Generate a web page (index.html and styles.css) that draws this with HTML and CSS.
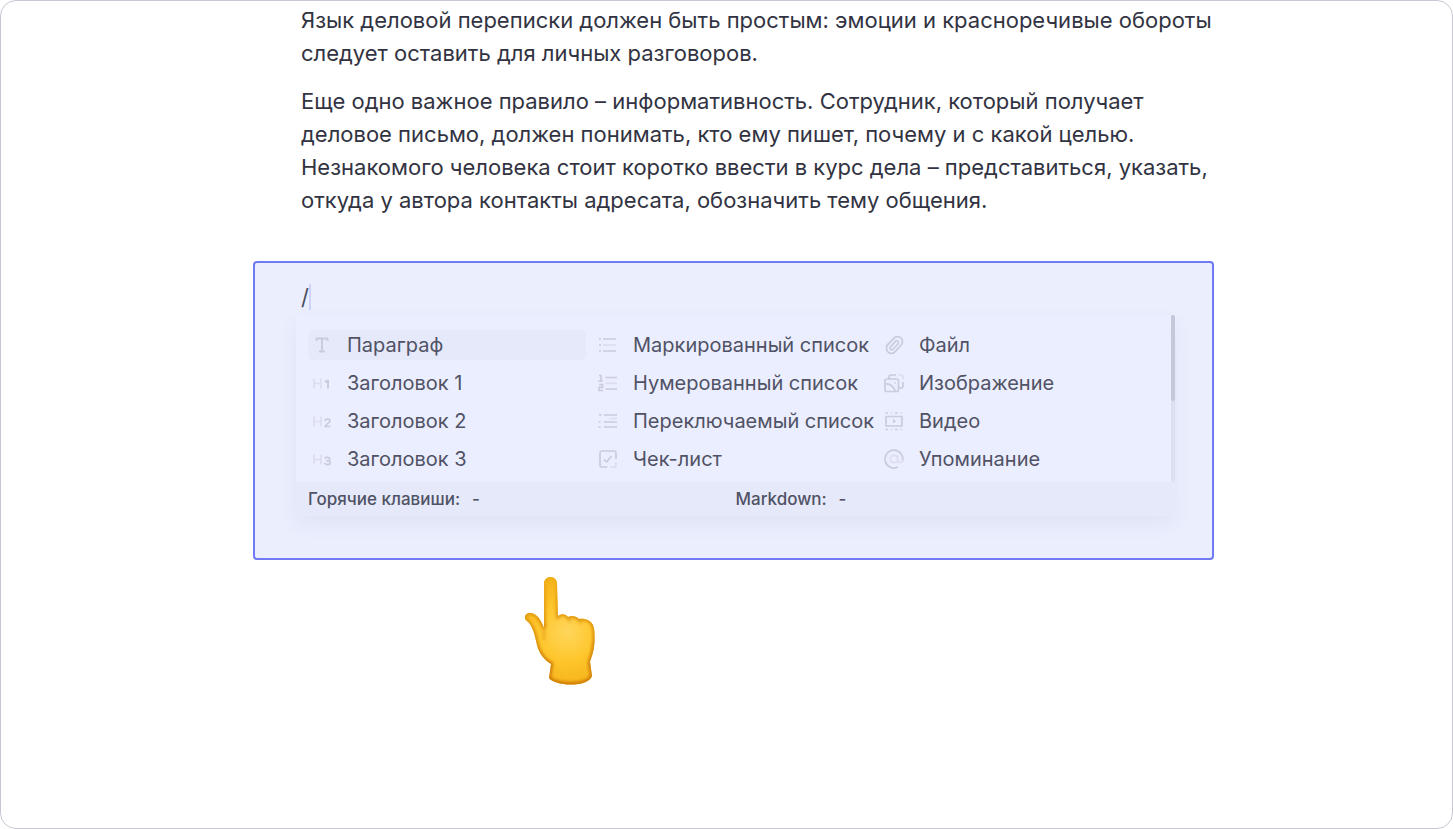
FILE: index.html
```html
<!DOCTYPE html>
<html lang="ru">
<head>
<meta charset="utf-8">
<title>Редактор</title>
<link rel="stylesheet" href="styles.css">
</head>
<body>
<main class="page">
  <article class="document">
    <div class="prose">
      <p>Язык деловой переписки должен быть простым: эмоции и красноречивые обороты следует оставить для личных разговоров.</p>
      <p>Еще одно важное правило – информативность. Сотрудник, который получает деловое письмо, должен понимать, кто ему пишет, почему и с какой целью. Незнакомого человека стоит коротко ввести в курс дела – представиться, указать, откуда у автора контакты адресата, обозначить тему общения.</p>
    </div>
    <section class="frame">
      <div class="command">/<span class="caret"></span></div>
      <div class="menu">
        <div class="menu-body">
          <div class="items">
            <button class="item active" type="button">
              <svg class="icon" viewBox="0 0 20 20"><path class="bold" d="M4.500 6V3.500h11V6M10 3.500v13M7 16.500h6"/></svg>Параграф</button>
            <button class="item" type="button">
              <svg class="icon" viewBox="0 0 20 20"><path class="faint" d="M2 5.500v10M9 5.500v10M2 10.500h7"/><path class="bold" d="M13 9l3-1.500v8"/></svg>Заголовок 1</button>
            <button class="item" type="button">
              <svg class="icon" viewBox="0 0 20 20"><path class="faint" d="M2 5.500v10M9 5.500v10M2 10.500h7"/><path d="M13 10c0-2.500 5-2.300 5 0 0 1.700-4 3.300-5 5.500h5.500"/></svg>Заголовок 2</button>
            <button class="item" type="button">
              <svg class="icon" viewBox="0 0 20 20"><path class="faint" d="M2 5.500v10M9 5.500v10M2 10.500h7"/><path d="M13 9.700c.5-2 4.700-2 4.700.2 0 1.600-1.500 1.800-2.700 1.800 1.500 0 3.200.3 3.200 2 0 2.600-5 2.500-5.500.2"/></svg>Заголовок 3</button>
            <button class="item" type="button">
              <svg class="icon" viewBox="0 0 20 20"><path d="M5 4h13M5 16h13M1 4h2M1 10h2M1 16h2"/><path class="faint" d="M5 10h13"/></svg>Маркированный список</button>
            <button class="item" type="button">
              <svg class="icon" viewBox="0 0 20 20"><path d="M7.500 4.500H19M7.500 16H19M1 2.500h2v5.500M.5 8h4.500M1 11.500h3.500v2.800H1V17.500h4"/><path class="faint" d="M7.500 10.300H19"/></svg>Нумерованный список</button>
            <button class="item" type="button">
              <svg class="icon" viewBox="0 0 20 20"><path d="M6 4h13M6 11h13M6 16h13M.5 11h2M.5 16h2"/><path class="solid" d="M.5 3h3.500L2.200 5.500z"/><path class="faint" d="M11 7.500h8"/></svg>Переключаемый список</button>
            <button class="item" type="button">
              <svg class="icon" viewBox="0 0 20 20"><path d="M9.500 18H4q-2 0-2-2V4q0-2 2-2h12q2 0 2 2v6M6 10.500l2.500 2.500 5-6"/><path class="faint" d="M12.500 18H16q2 0 2-2v-3"/></svg>Чек-лист</button>
            <button class="item" type="button">
              <svg class="icon" viewBox="0 0 20 20"><path class="faint" d="M1 11.500l4.500-4.500"/><g transform="rotate(42 10.500 10)"><path d="M5.500 9v5.500a5 5 0 0 0 10 0v-9a5 5 0 0 0-10 0V14.500"/><path d="M8.800 14.500V6.300a1.800 1.800 0 0 1 3.500 0v8.200a1.800 1.800 0 0 1-3.500 0"/></g></svg>Файл</button>
            <button class="item" type="button">
              <svg class="icon" viewBox="0 0 20 20"><path d="M3 6h9.500q2 0 2 2v8.500q0 2-2 2H3q-2 0-2-2V8q0-2 2-2zM1 11c5-1 8.500 2.500 10.500 7.500M5 6V4q0-2 2-2h5M19 9v4q0 2-2 2h-2M10.500 10h1.500"/><path class="faint" d="M14.500 2H17q2 0 2 2v2.500"/></svg>Изображение</button>
            <button class="item" type="button">
              <svg class="icon" viewBox="0 0 20 20"><path d="M2 5.500h16v9.500H2zM1.500 2h2.500M11 2h2.500M1.500 18.500h2.500M11 18.500h2.500"/><path class="solid" d="M9 8l3.200 2.200L9 12.500z"/><path class="faint" d="M6.500 2H8.500M16 2h2.500M6.500 18.500H8.500M16 18.500h2.500"/></svg>Видео</button>
            <button class="item" type="button">
              <svg class="icon" viewBox="0 0 20 20"><path d="M18.600 12A8.900 8.900 0 1 0 14 18"/><path class="faint" d="M13.700 10a3.700 3.700 0 1 0-7.400 0 3.700 3.700 0 0 0 7.400 0V6.500M13.700 10.500c0 4 5 4 5.200 0"/></svg>Упоминание</button>
          </div>
          <div class="scroll"><div class="thumb"></div></div>
        </div>
        <footer class="hints">
          <span>Горячие клавиши:<b>-</b></span>
          <span>Markdown:<b>-</b></span>
        </footer>
      </div>
    </section>
    <svg class="hand" viewBox="0 0 72 110" role="img" aria-label="Указатель">
      <defs>
        <radialGradient id="skin" gradientUnits="userSpaceOnUse" cx="43" cy="56" r="58">
          <stop offset="0" stop-color="#ffd65c"/>
          <stop offset=".5" stop-color="#fec62c"/>
          <stop offset="1" stop-color="#f4b01a"/>
        </radialGradient>
        <linearGradient id="edge" x1="0" y1="0" x2="0" y2="1">
          <stop offset="0" stop-color="#f0ad18"/>
          <stop offset="1" stop-color="#c97405"/>
        </linearGradient>
        <filter id="soft"><feGaussianBlur stdDeviation="1.600"/></filter>
        <path id="outline" d="M20 8C20 4 22.500 1 26.500 1s6.500 3 6.500 7l1 32c4-3 8-2 10 1 4-2 8-1 11 2 7-1 12 2 14 6 2 5 2 14 1 22-1 7-3 11-4 15l2 14c-2 6-11 8.500-21 8.500S28 106 25 102l2-14c-7-4-12-11-14-19-2-9-4-19-10-24C-1 42 1 37 6 37c7 0 11 7 14 15z"/>
        <clipPath id="shape"><use href="#outline"/></clipPath>
      </defs>
      <use href="#outline" fill="url(#skin)"/>
      <g clip-path="url(#shape)">
        <use href="#outline" fill="none" stroke="url(#edge)" stroke-width="4" filter="url(#soft)"/>
        <path class="crease" d="M20 48v16M44 41l2 5M55 43l2 5M12 72c4 10 9 14 17 17M25 103q20 10 44-1M70 66q-1 17-5 26"/>
      </g>
    </svg>
  </article>
</main>
</body>
</html>
```
FILE: styles.css
```css
* { box-sizing: border-box; }
body {
  margin: 0;
  background: #fff;
  color: #323342;
  font-family: Inter, "Noto Sans", sans-serif;
}
.page {
  min-height: 100vh;
  padding: 3px 0 0 14px;
  border: 1px solid #c8c7d3;
  border-radius: 16px;
}
.document { max-width: 961px; margin: 0 auto; }
.prose {
  padding-left: 48px;
  margin-right: -8px;
  font-size: 22px;
  line-height: 33px;
}
.prose p { margin: 0 0 15px; }
.frame {
  margin-top: 44px;
  padding: 18px 37px 42px 41px;
  border: 2px solid #707af4;
  border-radius: 4px;
  background: #eaeefd;
}
.command {
  display: flex;
  align-items: center;
  height: 32px;
  margin-bottom: 2px;
  padding-left: 5px;
  color: #4b4d60;
  font-size: 22px;
}
.caret { width: 2px; height: 26px; background: #cdd3fa; }
.menu {
  border-radius: 4px;
  background: #ebeefe;
  box-shadow: 0 8px 20px rgba(72, 72, 120, 0.06);
}
.menu-body { display: flex; }
.items {
  flex: 1;
  display: grid;
  grid-template-columns: repeat(3, 1fr);
  grid-template-rows: repeat(4, 30px);
  grid-auto-flow: column;
  gap: 8px;
  padding: 15px 13px 8px 12px;
}
.item {
  display: flex;
  align-items: center;
  gap: 15px;
  min-width: 0;
  padding: 0 4px;
  border: 0;
  border-radius: 5px;
  background: none;
  color: #505265;
  font: 400 20px Inter, "Noto Sans", sans-serif;
  text-align: left;
  white-space: nowrap;
}
.active { background: #e6e9fa; }
.icon {
  flex: none;
  width: 20px;
  height: 20px;
  overflow: visible;
  fill: none;
  stroke: #c9cbdf;
  stroke-width: 1.7;
  stroke-linejoin: round;
}
.icon .faint { stroke: #dcdeef; }
.icon .bold { stroke-width: 2; }
.icon .solid { fill: #c9cbdf; stroke: none; }
.scroll { width: 4px; border-radius: 2px; background: #dcdff0; }
.thumb { height: 86px; border-radius: 2px; background: #c5c7da; }
.hints {
  display: grid;
  grid-template-columns: 1fr 1fr;
  padding: 0 12px;
  border-radius: 0 0 4px 4px;
  background: #e6e9fa;
  color: #505265;
  font-size: 17px;
  font-weight: 500;
  line-height: 34px;
}
.hints b { margin-left: 12px; font-weight: 500; }
.hand {
  display: block;
  width: 72px;
  height: 110px;
  margin: 16px 0 0 271px;
}
.crease {
  fill: none;
  stroke: #d88b09;
  stroke-width: 2;
  opacity: 0.6;
  filter: url(#soft);
}
```
